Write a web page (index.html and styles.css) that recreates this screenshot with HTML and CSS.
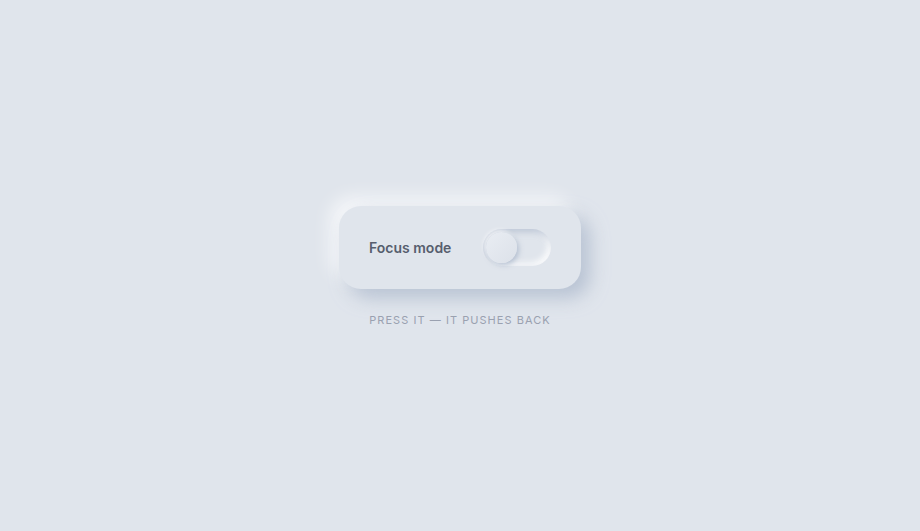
FILE: index.html
```html
<!DOCTYPE html>
<html>
<head>
<meta charset="utf-8">
<link rel="stylesheet" href="styles.css">
</head>
<body>
<main class="stage">
  <div class="card">
    <span class="label">Focus mode</span>
    <div class="toggle"><div class="knob"></div></div>
  </div>
  <p class="caption">PRESS IT — IT PUSHES BACK</p>
</main>
</body>
</html>
```
FILE: styles.css
```css
html, body {
  margin: 0;
  height: 100%;
  background: #e0e5ec;
  font-family: Inter, "Liberation Sans", sans-serif;
}
.stage {
  height: 100%;
  display: flex;
  flex-direction: column;
  align-items: center;
  justify-content: center;
  gap: 24px;
  padding-top: 2px;
  box-sizing: border-box;
}
.card {
  width: 242px;
  height: 83px;
  box-sizing: border-box;
  padding: 0 30px;
  border-radius: 22px;
  background: #e0e5ec;
  display: flex;
  align-items: center;
  justify-content: space-between;
  box-shadow: 9px 9px 18px rgba(163, 177, 198, 0.65), -9px -9px 18px rgba(255, 255, 255, 0.7);
}
.label {
  font-size: 14px;
  font-weight: 600;
  color: #575e6e;
}
.toggle {
  width: 68px;
  height: 37px;
  border-radius: 19px;
  background: #e0e5ec;
  box-shadow: inset 3px 3px 6px rgba(163, 177, 198, 0.6), inset -3px -3px 6px rgba(255, 255, 255, 0.9);
  display: flex;
  align-items: center;
  padding: 0 3px;
  box-sizing: border-box;
}
.knob {
  width: 31px;
  height: 31px;
  border-radius: 50%;
  background: linear-gradient(135deg, #e9edf3, #dce1e9);
  box-shadow: 2px 2px 5px rgba(163, 177, 198, 0.7), -2px -2px 4px rgba(255, 255, 255, 0.8);
}
.caption {
  margin: 0;
  font-size: 11px;
  letter-spacing: 1.05px;
  color: #9aa1b0;
}
```
